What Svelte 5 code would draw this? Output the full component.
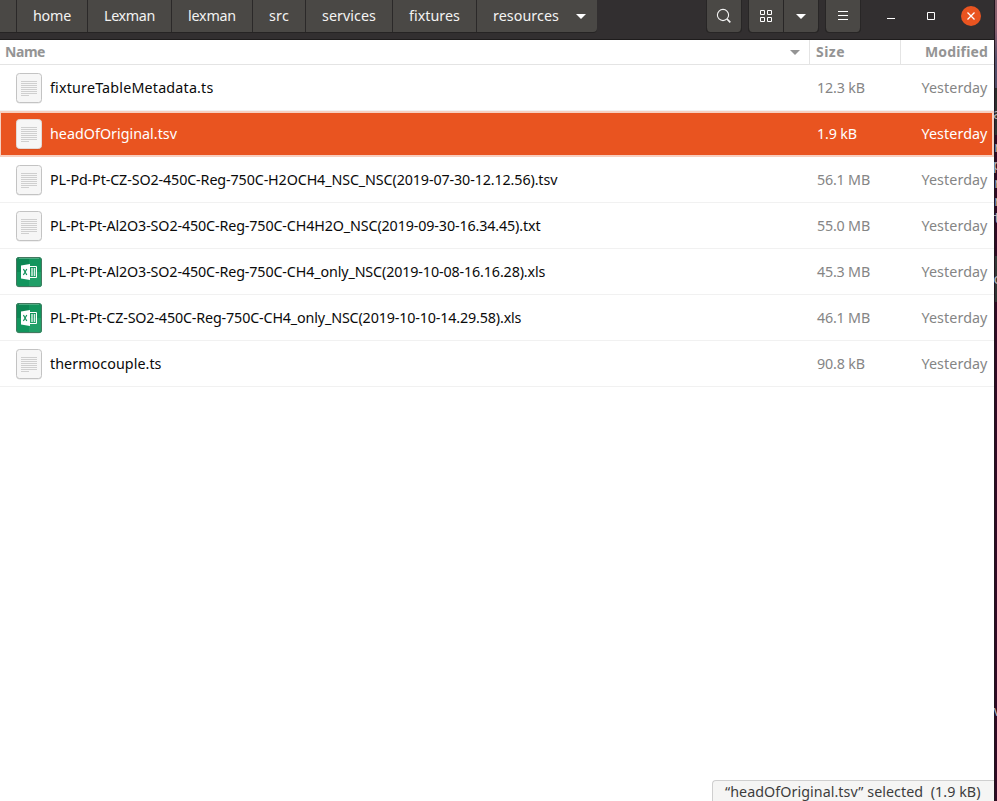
<script>
  const crumbs = [
    { label: 'home', seg: 71, w: 38 },
    { label: 'Lexman', seg: 84, w: 51 },
    { label: 'lexman', seg: 81, w: 48 },
    { label: 'src', seg: 53, w: 20 },
    { label: 'services', seg: 87, w: 54 },
    { label: 'fixtures', seg: 84, w: 51 },
    { label: 'resources', seg: 121, w: 66, current: true }
  ];
  const files = [
    { name: 'fixtureTableMetadata.ts', w: 163.5, size: '12.3 kB', sw: 48, type: 'text' },
    { name: 'headOfOriginal.tsv', w: 127, size: '1.9 kB', sw: 40, type: 'text', selected: true },
    { name: 'PL-Pd-Pt-CZ-SO2-450C-Reg-750C-H2OCH4_NSC_NSC(2019-07-30-12.12.56).tsv', w: 507.3, size: '56.1 MB', sw: 53, type: 'text' },
    { name: 'PL-Pt-Pt-Al2O3-SO2-450C-Reg-750C-CH4H2O_NSC(2019-09-30-16.34.45).txt', w: 490.5, size: '55.0 MB', sw: 53, type: 'text' },
    { name: 'PL-Pt-Pt-Al2O3-SO2-450C-Reg-750C-CH4_only_NSC(2019-10-08-16.16.28).xls', w: 495.3, size: '45.3 MB', sw: 53, type: 'xls' },
    { name: 'PL-Pt-Pt-CZ-SO2-450C-Reg-750C-CH4_only_NSC(2019-10-10-14.29.58).xls', w: 471.3, size: '46.1 MB', sw: 53, type: 'xls' },
    { name: 'thermocouple.ts', w: 111.5, size: '90.8 kB', sw: 48, type: 'text' }
  ];
  const fragments = [
    ['a', 114], ['r', 147], ['p', 165], ['r', 183], ['r', 201], ['t', 218], ['c', 279], ['v', 711]
  ];

  // Tracks a label so that it fills the given width.
  function fit(node, width) {
    const natural = node.getBoundingClientRect().width;
    node.style.letterSpacing = `${(width - natural) / node.textContent.length}px`;
  }
</script>

<div class="screen">
  <main class="window">
    <header>
      <nav>
        <span class="stub"></span>
        {#each crumbs as c}
          <button class="crumb" style:width="{c.seg}px">
            <span use:fit={c.w}>{c.label}</span>
            {#if c.current}
              <svg class="caret" width="10" height="5" viewBox="0 0 10 5"><path d="M0 0h10L5 5z" fill="#fff" /></svg>
            {/if}
          </button>
        {/each}
      </nav>
      <div class="tools">
        <button class="tool" aria-label="Search">
          <svg width="16" height="16" viewBox="0 0 16 16" fill="none" stroke="#f3f3f2"><circle cx="7" cy="7" r="5.6" stroke-width="1.1" /><path d="M11 11l3.3 3.3" stroke-width="1.7" /></svg>
        </button>
        <div class="pair">
          <button class="tool" aria-label="Icon view">
            <svg width="16" height="16" viewBox="0 0 16 16" fill="none" stroke="#fff"><path d="M2.500 2.500h4v4h-4zM9.500 2.500h4v4h-4zM2.500 9.500h4v4h-4zM9.500 9.500h4v4h-4z" /></svg>
          </button>
          <button class="tool" aria-label="View options">
            <svg width="10" height="5" viewBox="0 0 10 5"><path d="M0 0h10L5 5z" fill="#fff" /></svg>
          </button>
        </div>
        <button class="tool" aria-label="Menu">
          <svg width="16" height="16" viewBox="0 0 16 16" stroke="#fff"><path d="M3 3.500h10M3 7.500h10M3 11.500h10" /></svg>
        </button>
      </div>
      <div class="controls">
        <svg width="8" height="20" viewBox="0 0 8 20"><path d="M0 12.500h8" stroke="#fff" /></svg>
        <svg width="8" height="20" viewBox="0 0 8 20"><path d="M.5 6.500h7v7h-7z" fill="none" stroke="#fff" /></svg>
        <svg width="20" height="20" viewBox="0 0 20 20"><circle cx="10" cy="10" r="10" fill="#e95420" /><path d="M6.500 6.500l7 7m0-7l-7 7" stroke="#fff" stroke-width="1.3" /></svg>
      </div>
    </header>

    <div class="heads">
      <div class="name"><span use:fit={40}>Name</span>
        <svg width="10" height="5" viewBox="0 0 10 5"><path d="M0 0h10L5 5z" fill="#949494" /></svg>
      </div>
      <div class="size"><span use:fit={29}>Size</span></div>
      <div class="mod"><span use:fit={63}>Modified</span></div>
    </div>

    {#each files as f}
      <div class="row" class:selected={f.selected}>
        <div class="icon">
          {#if f.type === 'text'}
            <svg width="28" height="32" viewBox="0 0 28 32">
              <rect x="1.300" y="2" width="25.400" height="29.600" rx="3.500" fill="#000" opacity=".12" />
              <rect x="1.500" y="1.500" width="25" height="29" rx="3" fill="#f6f6f6" stroke={f.selected ? '#e3dad6' : '#c3c3c3'} />
              <path d="M6 9.500h16M6 11.500h16M6 13.500h16M6 15.500h16M6 17.500h16M6 19.500h16M6 21.500h16M6 23.500h8" stroke="#cfcfcf" />
            </svg>
          {:else}
            <svg width="28" height="32" viewBox="0 0 28 32">
              <rect x="1.300" y="2" width="25.400" height="29.400" rx="3.500" fill="#000" opacity=".15" />
              <rect x="1" y="1" width="26" height="30" rx="3.500" fill="#12955d" />
              <path d="M1 4.500A3.500 3.500 0 0 1 4.500 1H14v15H1z" fill="#0c8653" />
              <path d="M14 16h13v11.500a3.500 3.500 0 0 1-3.500 3.500H14z" fill="#219f68" />
              <rect x="1.500" y="1.500" width="25" height="29" rx="3" fill="none" stroke="#44775f" />
              <path d="M4 2.500h20" stroke="#4cac82" />
              <path d="M6 9.500L15 8v16l-9-1.500z" fill="#fff" />
              <path d="M8.400 13l3.400 6M11.800 13l-3.400 6" stroke="#12905a" stroke-width="1.200" />
              <path d="M15 10.500h6.500v11H15" fill="none" stroke="#fff" />
              <path d="M17 12v8M19.500 12v8" stroke="#d6f0e3" stroke-width="1.500" />
            </svg>
          {/if}
        </div>
        <div class="fname"><span use:fit={f.w}>{f.name}</span></div>
        <div class="fsize"><span use:fit={f.sw}>{f.size}</span></div>
        <div class="fdate"><span use:fit={66}>Yesterday</span></div>
      </div>
    {/each}
    <div class="status"><span use:fit={255.5}>“headOfOriginal.tsv” selected&nbsp; (1.9 kB)</span></div>
  </main>
  <aside>
    {#each fragments as [ch, y]}
      <span style:top="{y - 10}px">{ch}</span>
    {/each}
  </aside>
</div>

<style>
  .screen {
    display: flex;
    width: 997px;
    height: 801px;
    overflow: hidden;
    font: 14.300px/20px 'Noto Sans', 'Open Sans', sans-serif;
  }
  .window {
    width: 994px;
    height: 801px;
    background: #fff;
    display: flex;
    flex-direction: column;
  }
  span { white-space: pre; }
  svg { display: block; flex: none; }
  button {
    font: inherit;
    color: #f3f3f2;
    border: 0;
    padding: 0;
    margin: 0;
    box-sizing: border-box;
  }
  header {
    box-sizing: border-box;
    height: 40px;
    background: #322f30;
    border-bottom: 1px solid #1e1c1c;
    display: flex;
    align-items: flex-start;
    flex: none;
  }
  nav {
    display: flex;
    width: 706px;
    height: 32px;
  }
  .stub, .crumb { background: #4a4845; height: 32px; }
  .stub { width: 16px; box-shadow: 0 1px #262424; }
  .crumb {
    border-left: 1px solid #2b2929;
    box-shadow: 0 1px #262424;
    display: flex;
    align-items: center;
    padding-left: 16px;
  }
  .crumb:last-child { border-radius: 0 0 4px 0; }
  .caret { margin-left: 17px; }
  .tools { display: flex; gap: 6px; }
  .tool {
    width: 36px;
    height: 32px;
    display: flex;
    align-items: center;
    justify-content: center;
    background: #4a4845;
    background-clip: padding-box;
    border: 1px solid #282626;
    border-top: 0;
    border-bottom: 0;
    border-radius: 0 0 4px 4px;
    box-shadow: 0 1px #282626;
  }
  .pair { display: flex; }
  .pair .tool:first-child { border-bottom-right-radius: 0; }
  .pair .tool:last-child { border-bottom-left-radius: 0; border-left: 0; width: 35px; }
  .controls {
    display: flex;
    gap: 32px;
    margin: 6px 0 0 auto;
    padding-right: 13px;
  }
  .controls svg:last-child { margin-left: -6px; }
  .heads {
    display: flex;
    flex: none;
    height: 25px;
    box-sizing: border-box;
    border-bottom: 1px solid #e4e4e4;
    color: #949494;
    font-weight: 700;
    font-size: 14px;
    line-height: 24px;
  }
  .heads > div { box-sizing: border-box; display: flex; align-items: center; }
  .name { width: 810px; padding: 0 9px 0 5px; justify-content: space-between; border-right: 1px solid #e4e4e4; }
  .size { width: 91px; padding-left: 6px; border-right: 1px solid #e4e4e4; }
  .mod { flex: 1; padding-right: 6px; justify-content: flex-end; }
  .row {
    display: flex;
    align-items: center;
    flex: none;
    box-sizing: border-box;
    height: 46px;
    border-bottom: 1px solid #f1f1f1;
    color: #0a0a0a;
  }
  .icon { width: 35px; padding-left: 15px; }
  .fname { width: 767px; }
  .fsize { width: 75px; color: #858585; }
  .fdate { flex: 1; display: flex; justify-content: flex-end; padding-right: 6.500px; color: #858585; }
  .row.selected {
    background: #e95420;
    border: 2px solid #f7cfc0;
    border-left-width: 1px;
    color: #fff;
  }
  .selected .icon { padding-left: 14px; }
  .selected .fdate { padding-right: 4.500px; }
  .selected .fsize, .selected .fdate { color: #fff; }
  .status {
    margin: auto 0 0 712px;
    box-sizing: border-box;
    height: 21px;
    border: 1px solid #cfcfcf;
    border-right: 0;
    border-bottom: 0;
    border-top-left-radius: 4px;
    background: #f5f5f4;
    color: #3d3d3d;
    padding-left: 12px;
    line-height: 22px;
  }
  aside {
    position: relative;
    width: 3px;
    overflow: hidden;
    background: linear-gradient(#8b6470 0, #8b6070 28px, #55506c 60px, #514c68 88px, #2b2c2c 88px, #303434 135px, #300a24 135px, #300a24 256px, #353938 256px, #303333 302px, #300a24 302px);
    box-shadow: inset 1px 0 #20161d;
  }
  aside span {
    position: absolute;
    left: -1px;
    color: #b8b3b6;
    font: 14px/20px 'DejaVu Sans Mono', monospace;
  }
</style>
